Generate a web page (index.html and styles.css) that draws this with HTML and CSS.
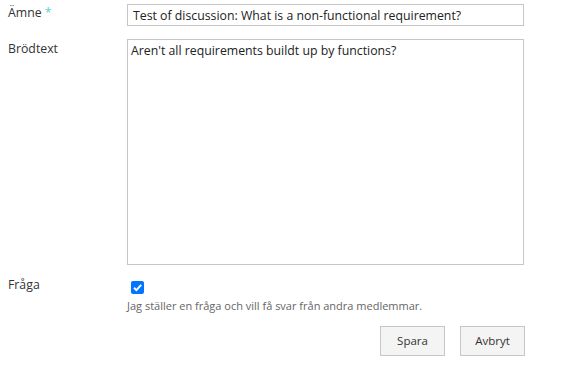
FILE: index.html
```html
<!DOCTYPE html>
<html lang="sv">
<head>
	<meta charset="UTF-8">
	<title>Ny diskussion</title>
	<link rel="stylesheet" href="styles.css">
</head>
<body>
	<form class="form">
		<div class="row">
			<label class="label" for="subject">Ämne <span class="req">*</span></label>
			<div class="field">
				<input class="input" id="subject" type="text" value="Test of discussion: What is a non-functional requirement?">
			</div>
		</div>
		<div class="row row-body">
			<label class="label" for="body">Brödtext</label>
			<div class="field">
				<textarea class="textarea" id="body">Aren't all requirements buildt up by functions?</textarea>
			</div>
		</div>
		<div class="row row-question">
			<label class="label" for="question">Fråga</label>
			<div class="field">
				<span class="check">
					<svg width="13" height="13" viewBox="0 0 13 13">
						<rect width="13" height="13" rx="2" fill="#0075ff"/>
						<path d="M3 6.8 L5.4 9.1 L10.2 3.9" fill="none" stroke="#fff" stroke-width="2"/>
					</svg>
				</span>
				<div class="hint">Jag ställer en fråga och vill få svar från andra medlemmar.</div>
			</div>
		</div>
		<div class="buttons">
			<button type="button" class="btn">Spara</button>
			<button type="button" class="btn">Avbryt</button>
		</div>
	</form>
</body>
</html>
```

FILE: styles.css
```css
*{
	margin: 0;
	padding: 0;
	box-sizing: border-box;
}
body{
	font-family: "Open Sans", "Noto Sans", sans-serif;
	font-size: 12.3px;
	line-height: 18px;
	color: #333;
	background: #fff;
}
.form{
	width: 525px;
	padding: 4px 0 0 8px;
}
.row{
	display: flex;
}
.label{
	width: 119px;
	color: #333;
}
.req{
	color: #5ecfcf;
}
.field{
	flex: 1;
}
.input{
	display: block;
	width: 397px;
	height: 22px;
	border: 1px solid #c6c6c6;
	padding: 0 5px;
	font: inherit;
	color: #222;
}
.row-body{
	margin-top: 13px;
}
.row-body .label{
	padding-top: 1px;
}
.textarea{
	display: block;
	width: 397px;
	height: 226px;
	border: 1px solid #c6c6c6;
	padding: 2px 3px;
	font: inherit;
	color: #222;
	resize: none;
}
.row-question{
	margin-top: 11px;
}
.check{
	display: block;
	margin: 5px 0 0 4px;
	height: 13px;
}
.check svg{
	display: block;
}
.hint{
	margin-top: 4px;
	font-size: 11px;
	line-height: 16px;
	color: #666;
}
.buttons{
	display: flex;
	justify-content: flex-end;
	gap: 15px;
	margin-top: 12px;
}
.btn{
	width: 65px;
	height: 30px;
	border: 1px solid #c6c6c6;
	background: #f4f4f4;
	font: inherit;
	font-size: 11.5px;
	color: #333;
}
```
